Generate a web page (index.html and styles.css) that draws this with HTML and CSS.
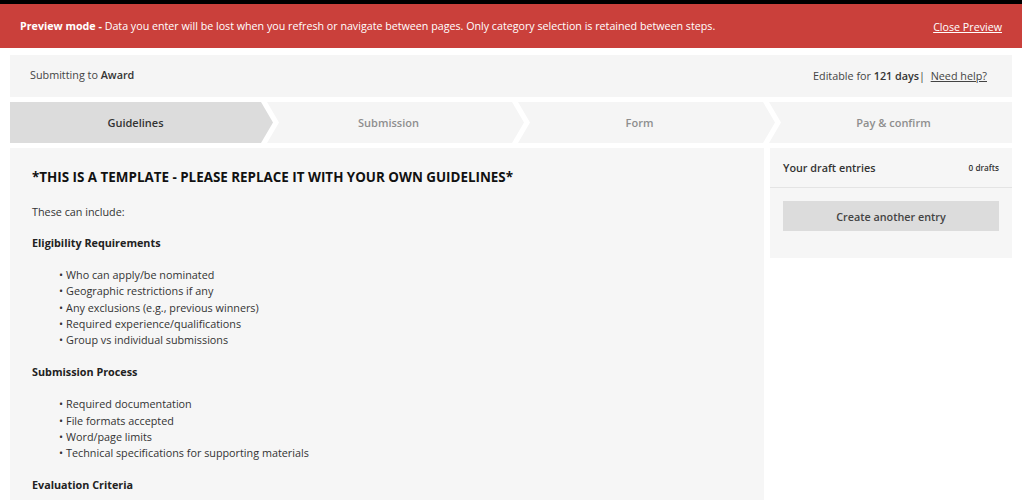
FILE: index.html
```html
<!DOCTYPE html>
<html lang="en">
<head>
<meta charset="utf-8">
<title>Guidelines</title>
<link rel="stylesheet" href="styles.css">
</head>
<body>
<div class="page">
  <div class="topbar"></div>
  <div class="banner">
    <p class="banner-text"><strong>Preview mode -</strong> Data you enter will be lost when you refresh or navigate between pages. Only category selection is retained between steps.</p>
    <a class="banner-link" href="#">Close Preview</a>
  </div>
  <div class="wrap">
    <div class="header">
      <span class="header-left">Submitting to <strong>Award</strong></span>
      <span class="header-right">Editable for <strong>121 days</strong>| &nbsp;<a href="#">Need help?</a></span>
    </div>
    <div class="steps">
      <div class="step step-first active">Guidelines</div>
      <div class="step">Submission</div>
      <div class="step">Form</div>
      <div class="step step-last">Pay &amp; confirm</div>
    </div>
    <div class="main">
      <div class="content">
        <h1 class="title">*THIS IS A TEMPLATE - PLEASE REPLACE IT WITH YOUR OWN GUIDELINES*</h1>
        <p class="intro">These can include:</p>
        <p class="section">Eligibility Requirements</p>
        <ul class="list">
          <li>Who can apply/be nominated</li>
          <li>Geographic restrictions if any</li>
          <li>Any exclusions (e.g., previous winners)</li>
          <li>Required experience/qualifications</li>
          <li>Group vs individual submissions</li>
        </ul>
        <p class="section">Submission Process</p>
        <ul class="list">
          <li>Required documentation</li>
          <li>File formats accepted</li>
          <li>Word/page limits</li>
          <li>Technical specifications for supporting materials</li>
        </ul>
        <p class="section last">Evaluation Criteria</p>
      </div>
      <aside class="sidebar">
        <div class="side-head">
          <span class="side-title">Your draft entries</span>
          <span class="side-count">0 drafts</span>
        </div>
        <div class="side-body">
          <button class="btn" type="button">Create another entry</button>
        </div>
      </aside>
    </div>
  </div>
</div>
</body>
</html>
```
FILE: styles.css
```css
* { box-sizing: border-box; }
html, body { margin: 0; padding: 0; background: #ffffff; }
html { height: 500px; overflow: hidden; }
body {
  font-family: "Open Sans", "Liberation Sans", sans-serif;
  font-size: 10.8px;
  color: #333333;
}
.page { width: 1022px; }
.topbar { height: 4px; background: #000000; }
.banner {
  height: 44px;
  background: #ca403b;
  color: #ffffff;
  display: flex;
  align-items: center;
  justify-content: space-between;
  padding: 0 20px 1px 20px;
  font-size: 10.7px;
}
.banner-text { margin: 0; }
.banner-link { color: #ffffff; text-decoration: underline; margin-top: 2px; }
.wrap { margin: 7px 10px 0 10px; }
.header {
  height: 42px;
  background: #f5f5f5;
  display: flex;
  align-items: center;
  justify-content: space-between;
  padding: 0 25px 2px 20px;
  color: #444444;
  font-size: 10.8px;
}
.header-left { margin-bottom: 2px; }
.header strong { color: #333333; font-weight: 600; }
.header a { color: #444444; }
.steps {
  display: flex;
  height: 41px;
  margin-top: 5px;
}
.step {
  flex: 0 0 257px;
  background: #f5f5f5;
  color: #8e8e8e;
  font-weight: 600;
  font-size: 11px;
  display: flex;
  align-items: center;
  justify-content: center;
  padding-right: 14px;
  margin-right: -6px;
  clip-path: polygon(0 0, calc(100% - 12px) 0, 100% 50%, calc(100% - 12px) 100%, 0 100%, 12px 50%);
}
.step-first {
  flex-basis: 263px;
  padding-right: 12px;
  clip-path: polygon(0 0, calc(100% - 12px) 0, 100% 50%, calc(100% - 12px) 100%, 0 100%);
}
.step-last {
  flex: 1 1 auto;
  margin-right: 0;
  padding-right: 0;
  padding-left: 6px;
  clip-path: polygon(0 0, 100% 0, 100% 100%, 0 100%, 12px 50%);
}
.step.active { background: #dcdcdc; color: #333333; }
.main {
  display: flex;
  gap: 6px;
  margin-top: 5px;
  align-items: flex-start;
}
.content {
  flex: 0 0 754px;
  background: #f6f6f6;
  padding: 19px 22px 20px 22px;
}
.title {
  font-size: 13.4px;
  line-height: 20px;
  font-weight: 700;
  color: #111111;
  margin: 0 0 17px 0;
}
.content p { margin: 0 0 16px 0; line-height: 16px; }
.content .intro { margin-bottom: 15px; }
.content .section { font-weight: 700; color: #222222; }
.content .section.last { margin-bottom: 0; }
.list {
  list-style: none;
  margin: 0 0 16px 0;
  padding: 0 0 0 27px;
  line-height: 16.25px;
}
.list li::before { content: "\2022"; margin-right: 3px; }
.sidebar {
  flex: 1 1 auto;
  background: #f6f6f6;
}
.side-head {
  height: 40px;
  display: flex;
  align-items: center;
  justify-content: space-between;
  padding: 0 13px 1px 13px;
  border-bottom: 1px solid #e4e4e4;
}
.side-title { font-weight: 600; color: #333333; font-size: 10.8px; }
.side-count { font-weight: 600; font-size: 8.2px; color: #333333; }
.side-body { padding: 13px 13px 27px 13px; }
.btn {
  display: block;
  width: 100%;
  height: 30px;
  border: 0;
  background: #dcdcdc;
  font-family: inherit;
  font-size: 10.8px;
  font-weight: 600;
  color: #444444;
  padding-bottom: 1px;
}
```
